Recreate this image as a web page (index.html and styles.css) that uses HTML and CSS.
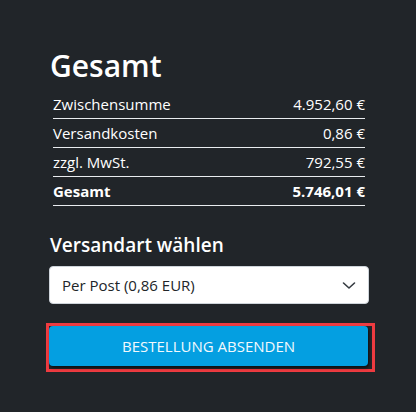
FILE: index.html
```html
<!DOCTYPE html>
<html lang="de">
    <head>
        <meta charset="utf-8">
        <link rel="stylesheet" href="styles.css">
    </head>
    <body>
        <div class="checkout">
            <h2>Gesamt</h2>
            <table class="totals">
                <tr><td>Zwischensumme</td><td class="amount">4.952,60 €</td></tr>
                <tr><td>Versandkosten</td><td class="amount">0,86 €</td></tr>
                <tr><td>zzgl. MwSt.</td><td class="amount">792,55 €</td></tr>
                <tr class="sum"><td>Gesamt</td><td class="amount">5.746,01 €</td></tr>
            </table>
            <h4>Versandart wählen</h4>
            <div class="select_box">
                <select class="shipping">
                    <option>Per Post (0,86 EUR)</option>
                    <option>Abholung (0,00 EUR)</option>
                </select>
                <svg class="chevron" width="14" height="10" viewBox="0 0 14 10">
                    <path d="M1.5 3 L7 8 L12.5 3" fill="none" stroke="#343a40" stroke-width="1.6" stroke-linecap="round" stroke-linejoin="round"/>
                </svg>
            </div>
            <div class="submit_wrap">
                <button class="submit">BESTELLUNG ABSENDEN</button>
            </div>
        </div>
    </body>
</html>
```

FILE: styles.css
```css
body{
    margin: 0;
    background-color: #212529;
    color: #fff;
    font-family: "Open Sans", "Noto Sans", sans-serif;
}
div.checkout{
    width: 320px;
    padding: 48px 0 0 49px;
}
h2{
    font-size: 30px;
    font-weight: 600;
    line-height: 1.2;
    margin: 0 0 6px 1px;
}
table.totals{
    width: 312px;
    margin: 0 4px;
    border-collapse: collapse;
    font-size: 15px;
}
table.totals td{
    padding: 4px 0 4px 0;
    line-height: 20px;
    border-bottom: 1px solid #e9ecef;
}
table.totals td.amount{
    text-align: right;
}
tr.sum td{
    font-weight: 700;
}
h4{
    font-size: 19px;
    font-weight: 600;
    line-height: 1.2;
    margin: 28px 0 9px 1px;
}
div.select_box{
    position: relative;
}
select.shipping{
    appearance: none;
    -webkit-appearance: none;
    width: 320px;
    height: 38px;
    padding: 0 12px;
    border: 1px solid #ced4da;
    border-radius: 4px;
    background-color: #fff;
    color: #212529;
    font-family: "Open Sans", "Noto Sans", sans-serif;
    font-size: 15px;
}
svg.chevron{
    position: absolute;
    top: 14px;
    right: 13px;
}
div.submit_wrap{
    margin: 19px 0 0 -3px;
    width: 322px;
    padding: 0 1px 3px 0;
    border: 3px solid #ee3b40;
}
button.submit{
    display: block;
    width: 319px;
    height: 40px;
    border: 0;
    border-radius: 4px;
    background-color: #049fe1;
    color: #f2f9fd;
    font-family: "Open Sans", "Noto Sans", sans-serif;
    font-size: 15px;
    box-shadow: 1px 2px 3px rgba(0, 0, 0, 0.6);
}
```
